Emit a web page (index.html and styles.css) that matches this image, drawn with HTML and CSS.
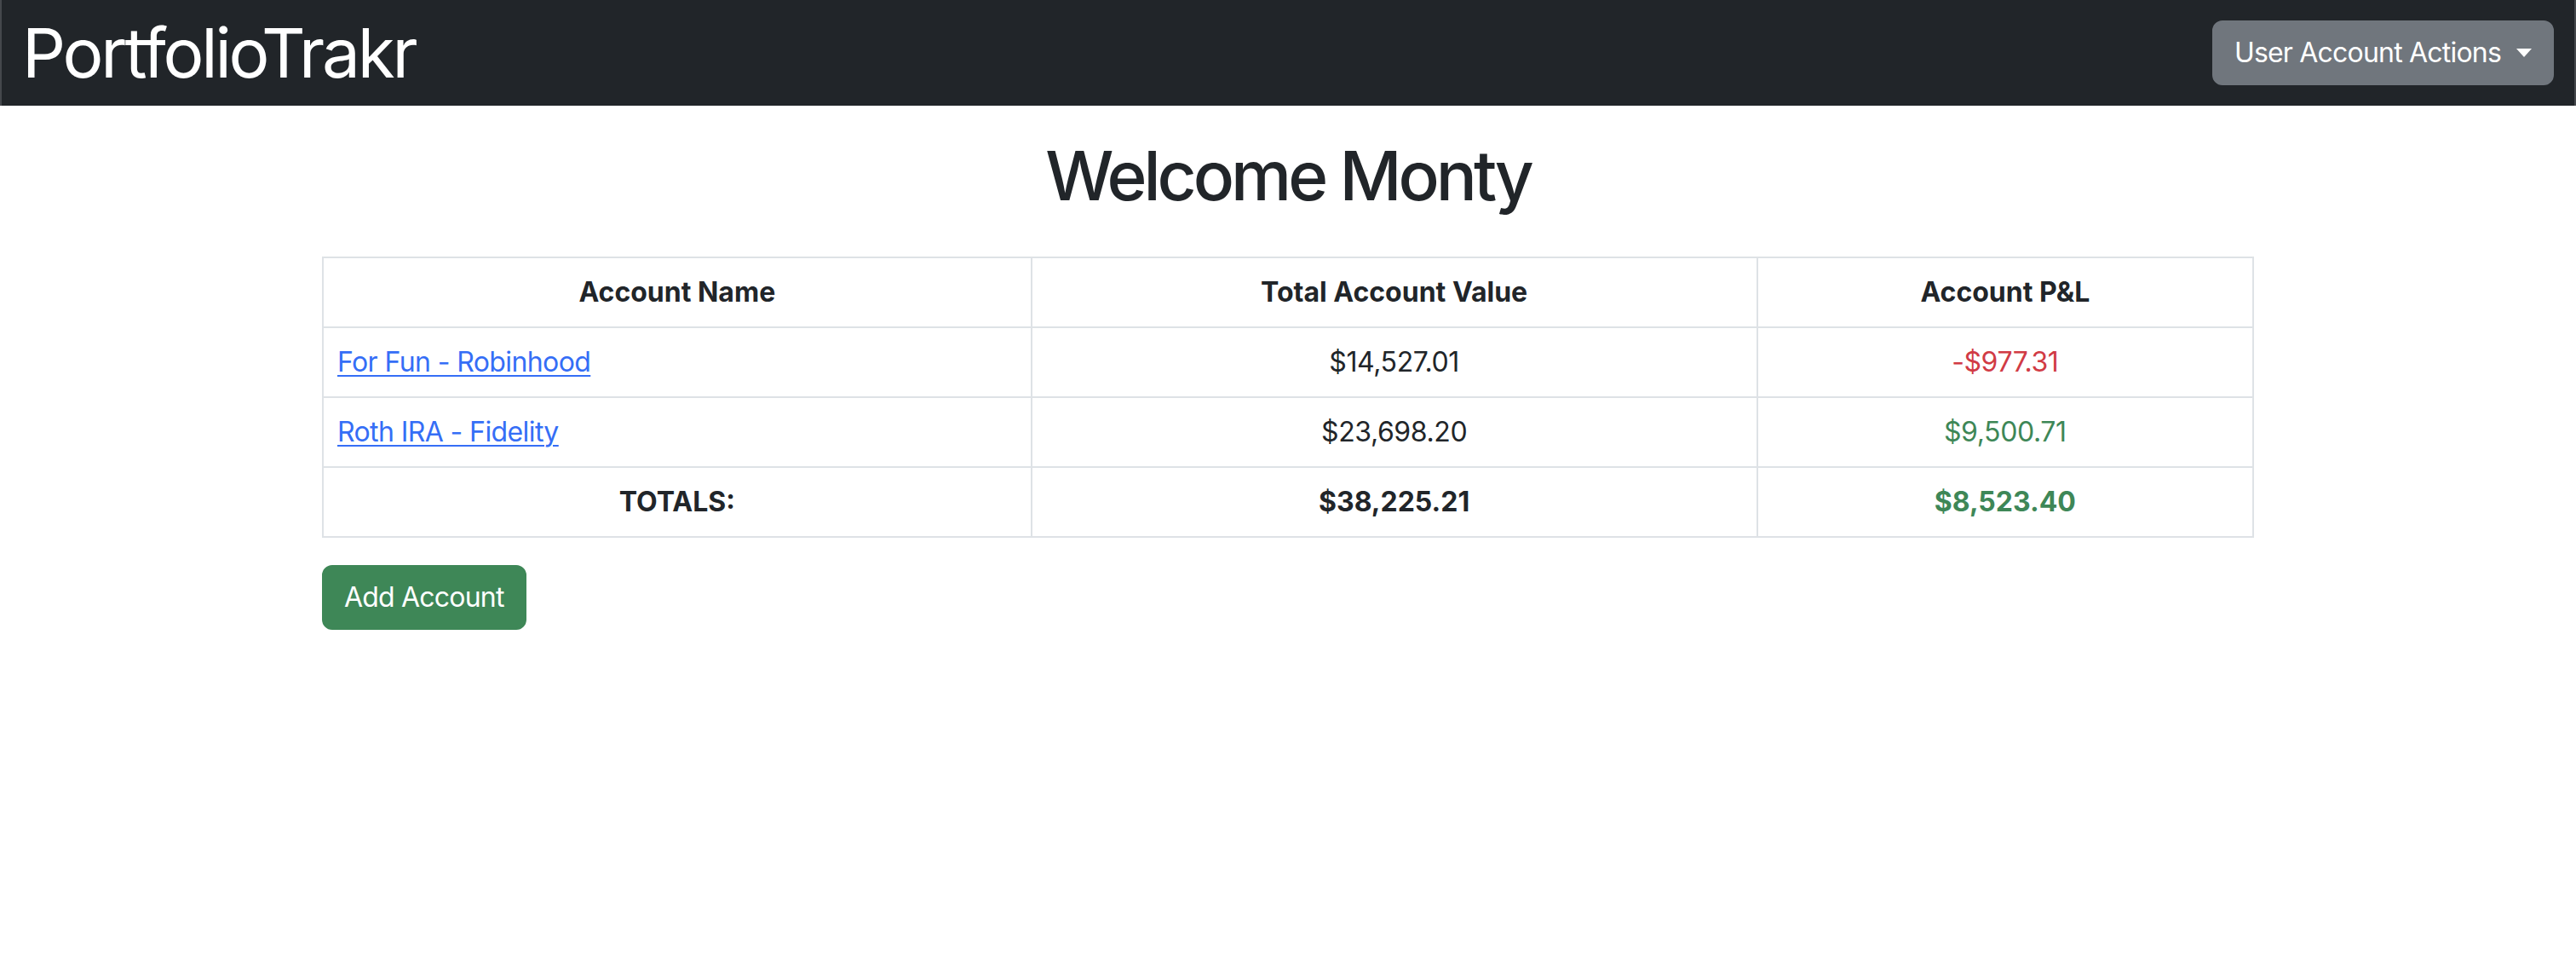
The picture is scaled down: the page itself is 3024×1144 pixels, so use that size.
FILE: index.html
```html
<!DOCTYPE html>
<html lang="en">
<head>
<meta charset="utf-8">
<title>PortfolioTrakr</title>
<link rel="stylesheet" href="styles.css">
</head>
<body>
<nav class="navbar">
  <a class="brand" href="#">PortfolioTrakr</a>
  <button class="btn btn-secondary dropdown-toggle" type="button">User Account Actions<span class="caret"></span></button>
</nav>
<main class="main">
  <h1 class="title">Welcome Monty</h1>
  <table class="accounts">
    <thead>
      <tr>
        <th class="col-name">Account Name</th>
        <th class="col-value">Total Account Value</th>
        <th class="col-pl">Account P&amp;L</th>
      </tr>
    </thead>
    <tbody>
      <tr>
        <td class="left"><a href="#">For Fun - Robinhood</a></td>
        <td>$14,527.01</td>
        <td class="neg">-$977.31</td>
      </tr>
      <tr>
        <td class="left"><a href="#">Roth IRA - Fidelity</a></td>
        <td>$23,698.20</td>
        <td class="pos">$9,500.71</td>
      </tr>
      <tr class="totals">
        <td>TOTALS:</td>
        <td>$38,225.21</td>
        <td class="pos">$8,523.40</td>
      </tr>
    </tbody>
  </table>
  <div class="actions">
    <button class="btn btn-success" type="button">Add Account</button>
  </div>
</main>
</body>
</html>
```

FILE: styles.css
```css
html, body {
  margin: 0;
  padding: 0;
  background: #ffffff;
}
body {
  font-family: Inter, "Noto Sans", "Liberation Sans", sans-serif;
  font-size: 32px;
  line-height: 1.5;
  color: #212529;
}
.navbar {
  height: 124px;
  box-sizing: border-box;
  background: #212529;
  display: flex;
  align-items: center;
  justify-content: space-between;
  padding: 0 24px 0 24px;
  border-left: 2px solid #45484c;
  border-right: 2px solid #45484c;
}
.brand {
  color: #ffffff;
  text-decoration: none;
  font-size: 80px;
  line-height: 1;
  font-weight: 400;
  letter-spacing: -3.2px;
}
.btn {
  font-family: inherit;
  font-size: 32px;
  line-height: 48px;
  height: 76px;
  padding: 0 24px;
  border: 2px solid transparent;
  border-radius: 12px;
  color: #ffffff;
  cursor: pointer;
  display: inline-flex;
  align-items: center;
  letter-spacing: -0.8px;
}
.btn-secondary {
  background: #70767d;
  border-color: #70767d;
}
.caret {
  display: inline-block;
  margin-left: 18px;
  width: 0;
  height: 0;
  border-top: 10px solid #ffffff;
  border-left: 9px solid transparent;
  border-right: 9px solid transparent;
}
.btn-success {
  background: #3e8757;
  border-color: #3e8757;
}
.main {
  padding: 0;
}
.title {
  margin: 34px 0 47px 0;
  text-align: center;
  font-size: 80px;
  font-weight: 500;
  line-height: 1.2;
  letter-spacing: -4px;
}
.accounts {
  width: 75%;
  margin: 0 auto 32px auto;
  border-collapse: collapse;
  border: 2px solid #dee2e6;
}
.accounts th,
.accounts td {
  border: 2px solid #dee2e6;
  padding: 16px;
  text-align: center;
  line-height: 48px;
  font-weight: 400;
  letter-spacing: -0.4px;
}
.accounts th {
  font-weight: 700;
  letter-spacing: 0;
}
.col-name { width: 36.7%; }
.col-value { width: 37.6%; }
.col-pl { width: 25.7%; }
.accounts td.left {
  text-align: left;
  letter-spacing: -0.6px;
}
.accounts a {
  color: #356ef6;
  text-decoration: underline;
  text-underline-offset: 4px;
  text-decoration-thickness: 2px;
}
.neg { color: #d13b45; }
.pos { color: #3e8757; }
.accounts .totals td {
  font-weight: 700;
  letter-spacing: 0;
}
.actions {
  width: 75%;
  margin: 0 auto;
}
```
